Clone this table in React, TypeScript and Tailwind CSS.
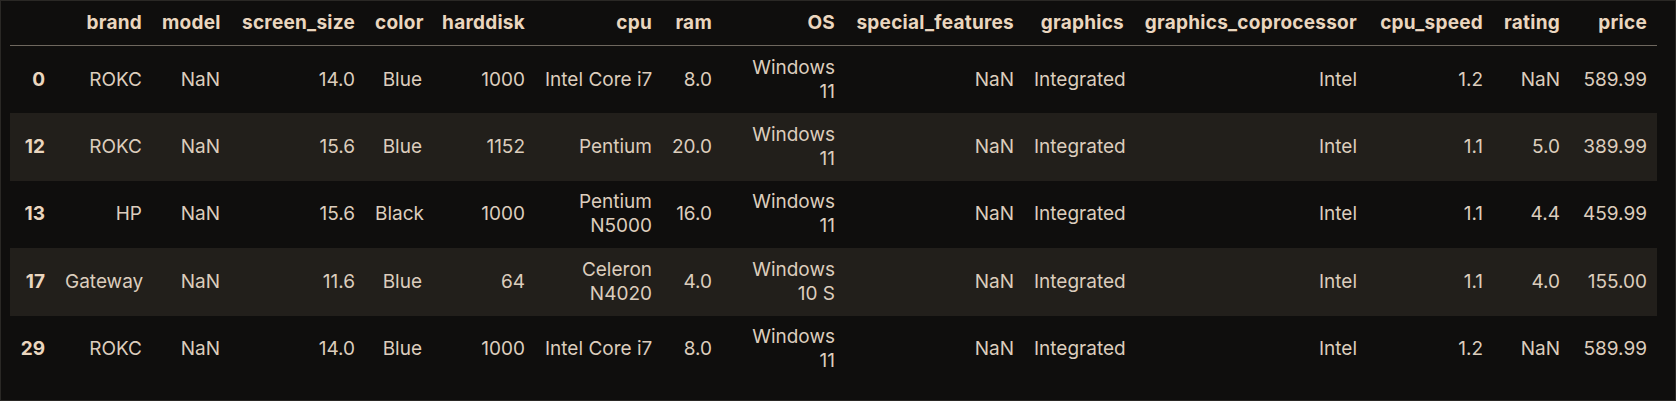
type Row = {
  idx: string;
  cells: string[][];
};

const COLUMNS = [
  { label: "", w: "w-[45px]" },
  { label: "brand", w: "w-[97px]" },
  { label: "model", w: "w-[78px]" },
  { label: "screen_size", w: "w-[135px]" },
  { label: "color", w: "w-[67px]" },
  { label: "harddisk", w: "w-[103px]" },
  { label: "cpu", w: "w-[127px]" },
  { label: "ram", w: "w-[60px]" },
  { label: "OS", w: "w-[123px]" },
  { label: "special_features", w: "w-[179px]" },
  { label: "graphics", w: "w-[110px]" },
  { label: "graphics_coprocessor", w: "w-[233px]" },
  { label: "cpu_speed", w: "w-[126px]" },
  { label: "rating", w: "w-[77px]" },
  { label: "price", w: "w-[87px]" },
];

const ROWS: Row[] = [
  {
    idx: "0",
    cells: [["ROKC"], ["NaN"], ["14.0"], ["Blue"], ["1000"], ["Intel Core i7"], ["8.0"], ["Windows", "11"], ["NaN"], ["Integrated"], ["Intel"], ["1.2"], ["NaN"], ["589.99"]],
  },
  {
    idx: "12",
    cells: [["ROKC"], ["NaN"], ["15.6"], ["Blue"], ["1152"], ["Pentium"], ["20.0"], ["Windows", "11"], ["NaN"], ["Integrated"], ["Intel"], ["1.1"], ["5.0"], ["389.99"]],
  },
  {
    idx: "13",
    cells: [["HP"], ["NaN"], ["15.6"], ["Black"], ["1000"], ["Pentium", "N5000"], ["16.0"], ["Windows", "11"], ["NaN"], ["Integrated"], ["Intel"], ["1.1"], ["4.4"], ["459.99"]],
  },
  {
    idx: "17",
    cells: [["Gateway"], ["NaN"], ["11.6"], ["Blue"], ["64"], ["Celeron", "N4020"], ["4.0"], ["Windows", "10 S"], ["NaN"], ["Integrated"], ["Intel"], ["1.1"], ["4.0"], ["155.00"]],
  },
  {
    idx: "29",
    cells: [["ROKC"], ["NaN"], ["14.0"], ["Blue"], ["1000"], ["Intel Core i7"], ["8.0"], ["Windows", "11"], ["NaN"], ["Integrated"], ["Intel"], ["1.2"], ["NaN"], ["589.99"]],
  },
];

export default function App() {
  return (
    <div className="w-[1676px] h-[401px] bg-[#0f0e0d] border border-[#2a2825] overflow-hidden font-['Inter',sans-serif] text-[19px] leading-[24px]">
      <table className="table-fixed border-collapse ml-[9px] w-[1647px]">
        <thead>
          <tr className="border-b border-[#6e675e]">
            {COLUMNS.map((c, i) => (
              <th key={i} className={`${c.w} px-[10px] py-[10px] text-right font-bold tracking-[0.25px] text-[#ead6bf] whitespace-nowrap`}>
                {c.label}
              </th>
            ))}
          </tr>
        </thead>
        <tbody>
          {ROWS.map((r, ri) => (
            <tr key={r.idx} className={ri % 2 === 1 ? "bg-[#221f1b]" : ""}>
              <th className="h-[67.5px] px-[10px] text-right font-bold text-[#ead6bf]">{r.idx}</th>
              {r.cells.map((lines, ci) => (
                <td key={ci} className="px-[10px] text-right align-middle text-[#dccdbd] whitespace-nowrap">
                  {lines.map((l, li) => (
                    <div key={li}>{l}</div>
                  ))}
                </td>
              ))}
            </tr>
          ))}
        </tbody>
      </table>
    </div>
  );
}
